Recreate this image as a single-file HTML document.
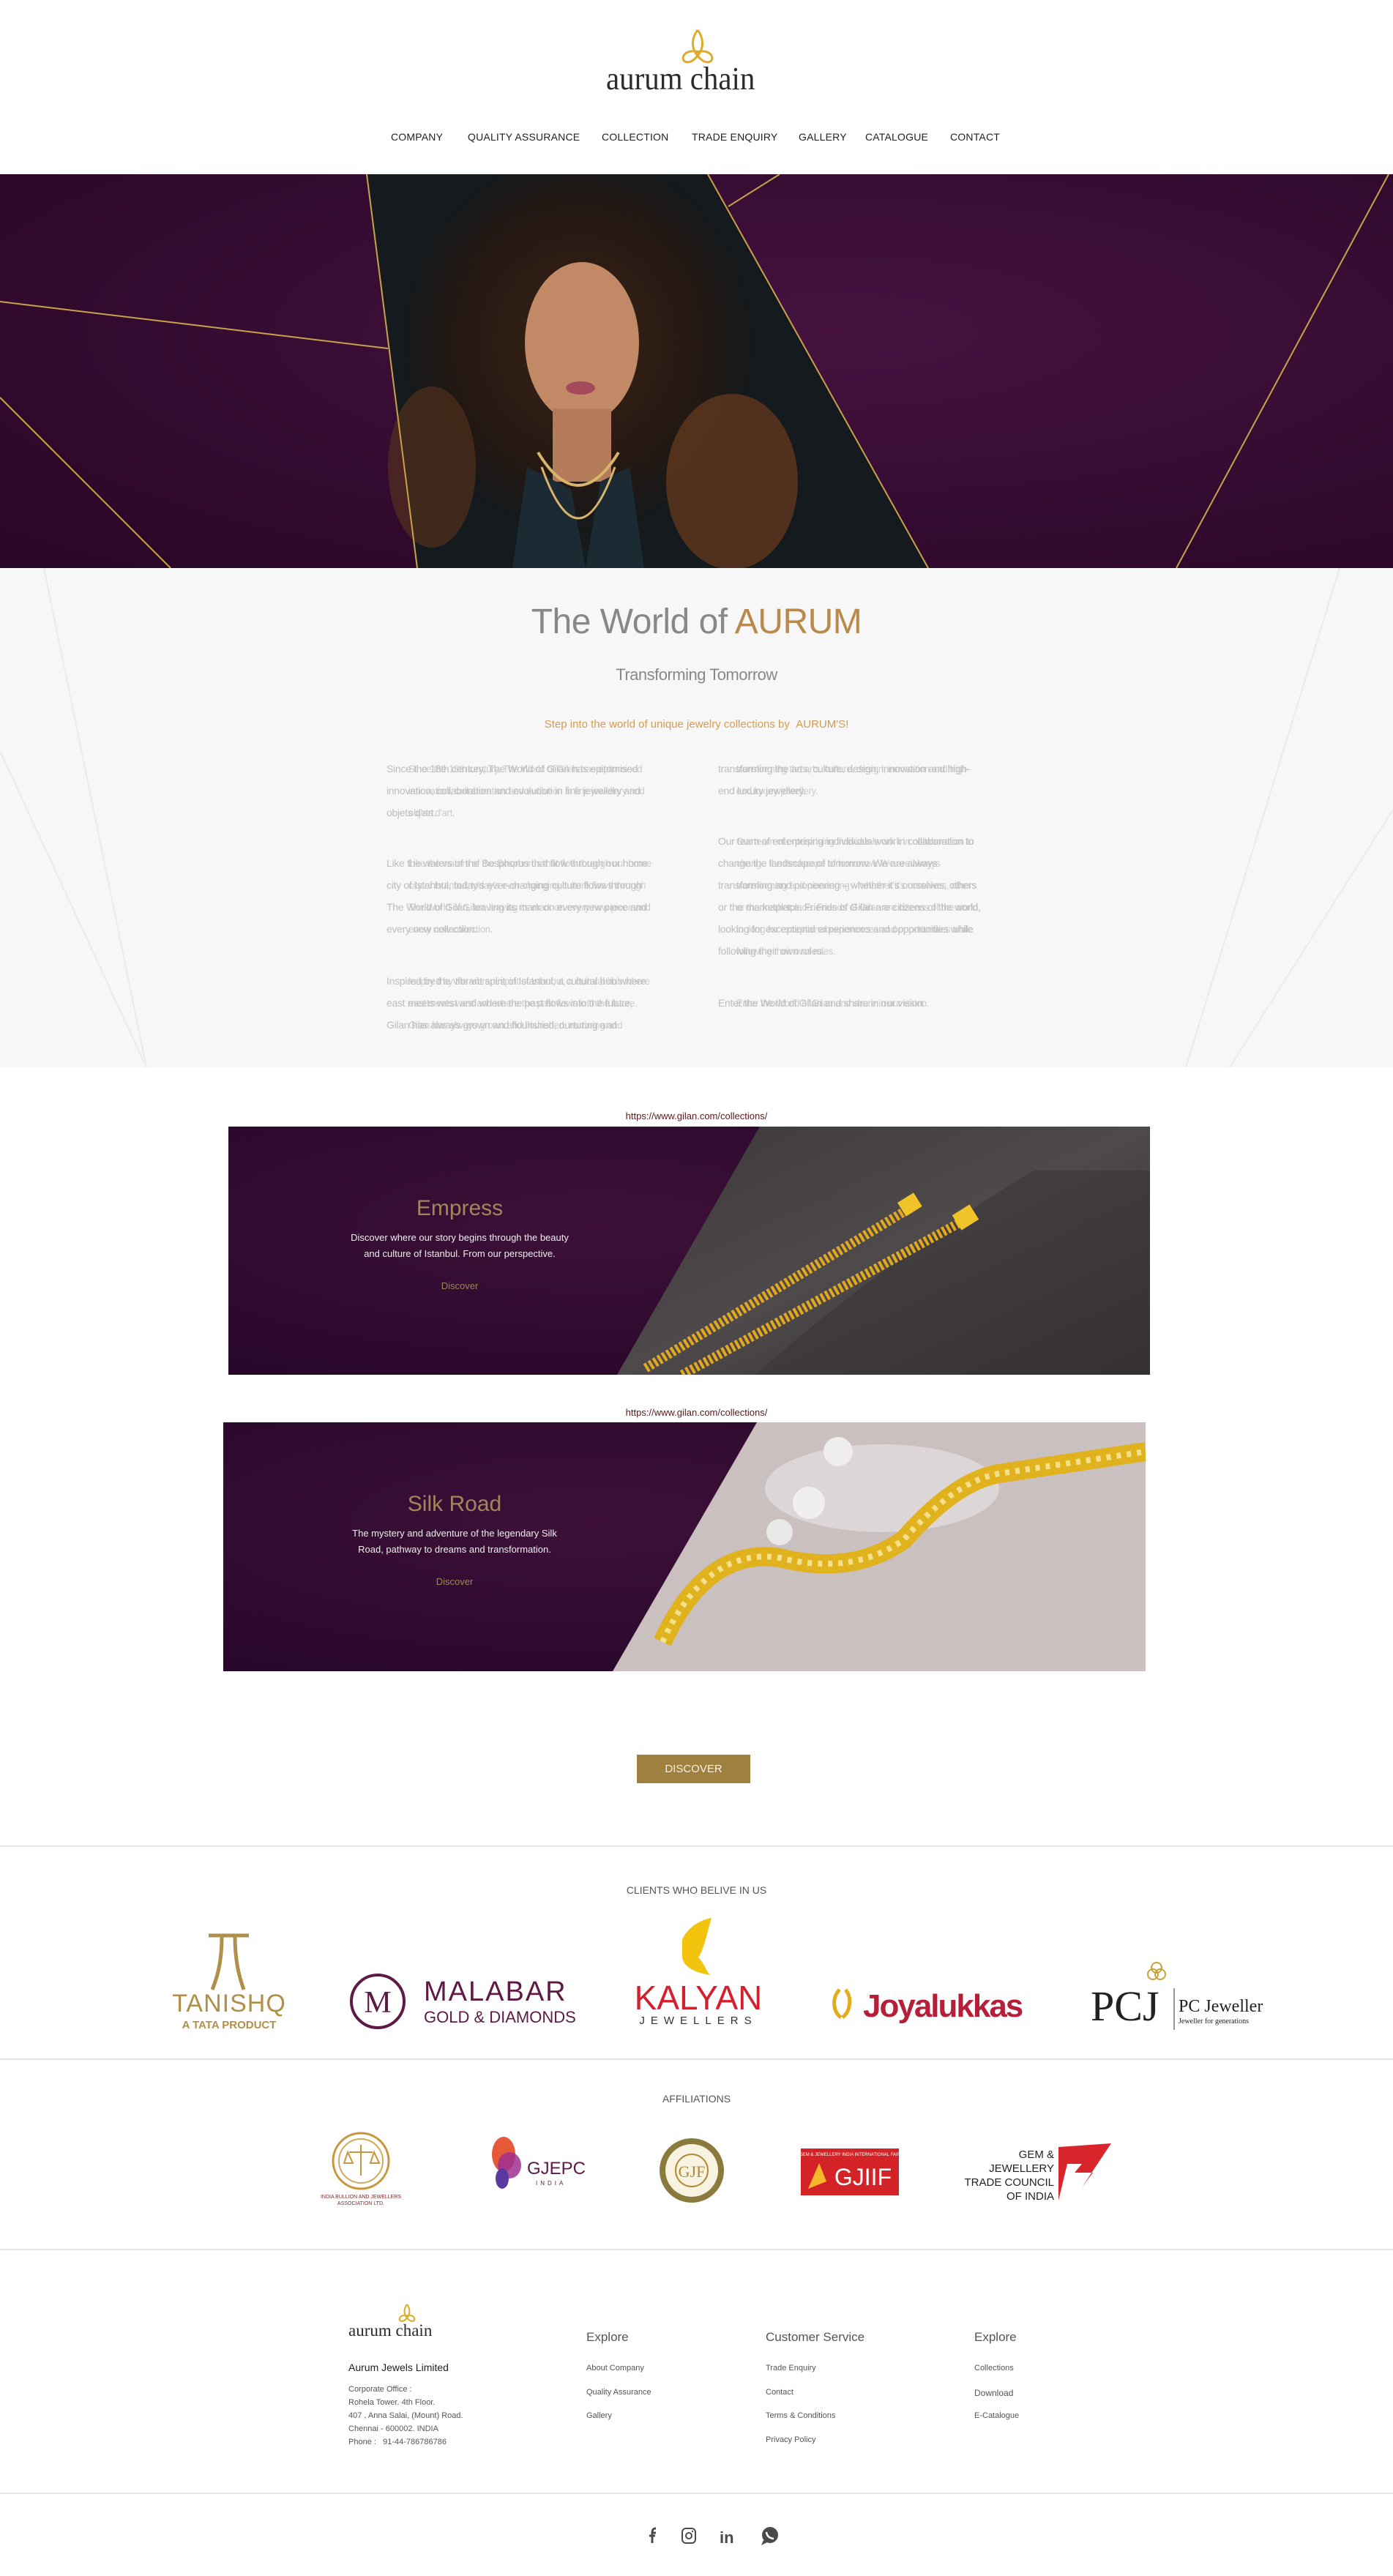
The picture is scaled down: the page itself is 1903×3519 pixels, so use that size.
<!DOCTYPE html>
<html><head><meta charset="utf-8">
<style>
*{margin:0;padding:0;box-sizing:border-box}
body{width:1903px;height:3519px;position:relative;background:#fff;font-family:"Liberation Sans",sans-serif;overflow:hidden}
.a{position:absolute}
.nav{top:179px;font-size:14px;color:#222;letter-spacing:0.2px;white-space:nowrap}
.col{font-size:14px;line-height:30px;color:#bdbdbd;white-space:nowrap;letter-spacing:-0.3px}
.ghost{opacity:.75;transform:scaleX(.93);transform-origin:left}
.hr{left:0;width:1903px;height:2px;background:#e4e4e4}
.ft{font-size:12px;color:#555;white-space:nowrap}
.fh{font-size:17px;color:#555;white-space:nowrap}
</style></head><body>

<!-- header logo -->
<svg class="a" style="left:928px;top:38px" width="50" height="52" viewBox="0 0 50 52">
<g fill="none" stroke="#e0ac28" stroke-width="3">
<path d="M25 3 C18 12 16 24 22 34 C26 40 30 44 34 46 C42 49 47 44 44 38 C41 32 30 30 22 34"/>
<path d="M25 3 C32 12 34 24 28 34 C24 40 20 44 16 46 C8 49 3 44 6 38 C9 32 20 30 28 34"/>
</g></svg>
<div class="a" style="left:828px;top:82px;font-family:'Liberation Serif',serif;font-size:44px;color:#2b2b2b;transform:scaleX(.93);transform-origin:left">aurum chain</div>

<div class="a nav" style="left:534px">COMPANY</div>
<div class="a nav" style="left:639px">QUALITY ASSURANCE</div>
<div class="a nav" style="left:822px">COLLECTION</div>
<div class="a nav" style="left:945px">TRADE ENQUIRY</div>
<div class="a nav" style="left:1091px">GALLERY</div>
<div class="a nav" style="left:1182px">CATALOGUE</div>
<div class="a nav" style="left:1298px">CONTACT</div>

<!-- hero -->
<svg class="a" style="left:0;top:238px" width="1903" height="538" viewBox="0 0 1903 538">
<defs>
<radialGradient id="pg" cx="0.6" cy="0.4" r="0.8"><stop offset="0" stop-color="#45123f"/><stop offset="1" stop-color="#2a0727"/></radialGradient>
<radialGradient id="hair" cx="0.5" cy="0.5" r="0.5"><stop offset="0" stop-color="#3a2418"/><stop offset="0.7" stop-color="#241812"/><stop offset="1" stop-color="#15191c"/></radialGradient>
</defs>
<rect width="1903" height="538" fill="url(#pg)"/>
<polygon points="501,0 967,0 1268,538 570,538" fill="#141a1d"/>
<ellipse cx="790" cy="230" rx="240" ry="260" fill="url(#hair)"/>
<ellipse cx="1000" cy="420" rx="90" ry="120" fill="#6b3c1e" opacity=".7"/>
<ellipse cx="590" cy="400" rx="60" ry="110" fill="#5a341c" opacity=".6"/>
<ellipse cx="795" cy="230" rx="78" ry="110" fill="#c28966"/>
<rect x="755" y="320" width="80" height="100" fill="#b47b5a"/>
<path d="M700 538 L720 400 L780 430 L800 538Z" fill="#1c2a33"/>
<path d="M880 538 L860 400 L820 420 L800 538Z" fill="#1c2a33"/>
<path d="M735 380 Q790 470 845 380" fill="none" stroke="#d8b56a" stroke-width="4"/>
<path d="M740 400 Q790 540 840 400" fill="none" stroke="#d8b56a" stroke-width="3"/>
<ellipse cx="793" cy="292" rx="20" ry="9" fill="#a54a5a"/>
<g stroke="#c9a24a" stroke-width="2" fill="none">
<line x1="501" y1="0" x2="570" y2="538"/>
<line x1="967" y1="0" x2="1268" y2="538"/>
<line x1="0" y1="174" x2="530" y2="238"/>
<line x1="0" y1="305" x2="233" y2="538"/>
<line x1="1897" y1="0" x2="1607" y2="538"/>
<line x1="1065" y1="0" x2="995" y2="44"/>
</g></svg>

<!-- world section -->
<div class="a" style="left:0;top:776px;width:1903px;height:682px;background:#f7f7f7"></div>
<svg class="a" style="left:0;top:776px" width="1903" height="682"><g stroke="#ecebe4" stroke-width="2" fill="none">
<line x1="60" y1="0" x2="200" y2="682"/><line x1="0" y1="250" x2="200" y2="682"/>
<line x1="1830" y1="0" x2="1620" y2="682"/><line x1="1903" y1="330" x2="1680" y2="682"/>
</g></svg>
<div class="a" style="left:0;width:1903px;top:822px;text-align:center;font-size:48px;color:#888;letter-spacing:-0.5px">The World of <span style="color:#b98a4c">AURUM</span></div>
<div class="a" style="left:0;width:1903px;top:909px;text-align:center;font-size:22px;color:#888;letter-spacing:-0.5px">Transforming Tomorrow</div>
<div class="a" style="left:0;width:1903px;top:981px;text-align:center;font-size:15px;color:#d49b52">Step into the world of unique jewelry collections by &nbsp;AURUM'S!</div>

<div class="a col" style="left:528px;top:1035px">Since the 18th century, The World of Gilan has epitomised<br>innovation, collaboration and evolution in fine jewellery and<br>objets d'art.</div>
<div class="a col ghost" style="left:558px;top:1035px">Since the 18th century, The World of Gilan has epitomised<br>innovation, collaboration and evolution in fine jewellery and<br>objets d'art.</div>
<div class="a col" style="left:528px;top:1164px">Like the waters of the Bosphorus that flow through our home<br>city of Istanbul, today's ever-changing culture flows through<br>The World of Gilan, leaving its mark on every new piece and<br>every new collection.</div>
<div class="a col ghost" style="left:558px;top:1164px">Like the waters of the Bosphorus that flow through our home<br>city of Istanbul, today's ever-changing culture flows through<br>The World of Gilan, leaving its mark on every new piece and<br>every new collection.</div>
<div class="a col" style="left:528px;top:1325px">Inspired by the vibrant spirit of Istanbul, a cultural hub where<br>east meets west and where the past flows into the future,<br>Gilan has always grown and flourished, nurturing and</div>
<div class="a col ghost" style="left:558px;top:1325px">Inspired by the vibrant spirit of Istanbul, a cultural hub where<br>east meets west and where the past flows into the future,<br>Gilan has always grown and flourished, nurturing and</div>

<div class="a col" style="left:981px;top:1035px">transforming the arts, culture, design, innovation and high-<br>end luxury jewellery.</div>
<div class="a col ghost" style="left:1006px;top:1035px">transforming the arts, culture, design, innovation and high-<br>end luxury jewellery.</div>
<div class="a col" style="left:981px;top:1134px">Our team of enterprising individuals work in collaboration to<br>change the landscape of tomorrow. We are always<br>transforming and pioneering – whether it's ourselves, others<br>or the marketplace. Friends of Gilan are citizens of the world,<br>looking for exceptional experiences and opportunities while<br>following their own rules.</div>
<div class="a col ghost" style="left:1006px;top:1134px">Our team of enterprising individuals work in collaboration to<br>change the landscape of tomorrow. We are always<br>transforming and pioneering – whether it's ourselves, others<br>or the marketplace. Friends of Gilan are citizens of the world,<br>looking for exceptional experiences and opportunities while<br>following their own rules.</div>
<div class="a col" style="left:981px;top:1355px">Enter the World of Gilan and share in our vision.</div>
<div class="a col ghost" style="left:1006px;top:1355px">Enter the World of Gilan and share in our vision.</div>

<!-- banner 1 -->
<div class="a" style="left:0;width:1903px;top:1517px;text-align:center;font-size:13px;color:#5a1a1a">https://www.gilan.com/collections/</div>
<svg class="a" style="left:312px;top:1539px" width="1259" height="339">
<defs><radialGradient id="b1" cx=".4" cy=".4" r=".7"><stop offset="0" stop-color="#3e1039"/><stop offset="1" stop-color="#28072a"/></radialGradient>
<linearGradient id="g1" x1="0" y1="0" x2="1" y2="1"><stop offset="0" stop-color="#3d393a"/><stop offset=".5" stop-color="#4e4a4b"/><stop offset="1" stop-color="#2e2b2c"/></linearGradient></defs>
<rect width="1259" height="339" fill="url(#b1)"/>
<polygon points="726,0 1259,0 1259,339 531,339" fill="url(#g1)"/>
<path d="M720 339 Q900 180 1100 60 L1259 60 L1259 339Z" fill="#3a3637" opacity=".6"/>
<g stroke="#e2a920" stroke-width="13" stroke-dasharray="4 3" fill="none">
<line x1="570" y1="330" x2="930" y2="112"/>
<line x1="620" y1="339" x2="1005" y2="128"/>
</g>
<rect x="918" y="96" width="26" height="22" fill="#f0c32a" transform="rotate(-32 930 107)"/>
<rect x="993" y="112" width="28" height="24" fill="#f0c32a" transform="rotate(-32 1007 124)"/>
</svg>
<div class="a" style="left:312px;width:632px;top:1634px;text-align:center;font-size:30px;color:#a0875a">Empress</div>
<div class="a" style="left:312px;width:632px;top:1680px;text-align:center;font-size:13px;line-height:22px;color:#eee">Discover where our story begins through the beauty<br>and culture of Istanbul. From our perspective.</div>
<div class="a" style="left:312px;width:632px;top:1749px;text-align:center;font-size:13px;color:#a0875a">Discover</div>

<!-- banner 2 -->
<div class="a" style="left:0;width:1903px;top:1922px;text-align:center;font-size:13px;color:#5a1a1a">https://www.gilan.com/collections/</div>
<svg class="a" style="left:305px;top:1943px" width="1260" height="340">
<defs><radialGradient id="b2" cx=".4" cy=".4" r=".7"><stop offset="0" stop-color="#3e1039"/><stop offset="1" stop-color="#28072a"/></radialGradient></defs>
<rect width="1260" height="340" fill="url(#b2)"/>
<polygon points="729,0 1260,0 1260,340 532,340" fill="#c9c0bf"/>
<ellipse cx="900" cy="90" rx="160" ry="60" fill="#e4dfdf" opacity=".7"/>
<circle cx="800" cy="110" r="22" fill="#f0eeee"/><circle cx="840" cy="40" r="20" fill="#efecec"/><circle cx="760" cy="150" r="18" fill="#eae7e7"/>
<path d="M600 300 Q660 170 760 185 Q860 210 930 160 Q1000 80 1060 70 L1260 40" fill="none" stroke="#e0b21e" stroke-width="26"/>
<path d="M600 300 Q660 170 760 185 Q860 210 930 160 Q1000 80 1060 70 L1260 40" fill="none" stroke="#f4e08a" stroke-width="8" stroke-dasharray="6 8"/>
</svg>
<div class="a" style="left:305px;width:632px;top:2038px;text-align:center;font-size:30px;color:#a0875a">Silk Road</div>
<div class="a" style="left:305px;width:632px;top:2084px;text-align:center;font-size:13px;line-height:22px;color:#eee">The mystery and adventure of the legendary Silk<br>Road, pathway to dreams and transformation.</div>
<div class="a" style="left:305px;width:632px;top:2153px;text-align:center;font-size:13px;color:#a0875a">Discover</div>

<div class="a" style="left:870px;top:2397px;width:155px;height:39px;background:#a0803f;color:#f5f0e6;font-size:15px;text-align:center;line-height:39px">DISCOVER</div>

<div class="a hr" style="top:2521px"></div>
<div class="a" style="left:0;width:1903px;top:2574px;text-align:center;font-size:14px;color:#555">CLIENTS WHO BELIVE IN US</div>

<!-- client logos -->
<svg class="a" style="left:225px;top:2638px" width="180" height="138">
<g fill="none" stroke="#b08f4a" stroke-width="5"><path d="M60 6 H115 M78 6 C78 40 73 60 65 80 M96 6 C96 40 101 60 108 80"/></g>
<text x="88" y="110" text-anchor="middle" font-family="Liberation Sans" font-size="34" fill="#b08f4a" letter-spacing="1">TANISHQ</text>
<text x="88" y="133" text-anchor="middle" font-family="Liberation Sans" font-size="15" font-weight="bold" fill="#b08f4a">A TATA PRODUCT</text>
</svg>
<svg class="a" style="left:478px;top:2695px" width="320" height="82">
<circle cx="38" cy="39" r="36" fill="none" stroke="#5c1a45" stroke-width="4"/>
<text x="38" y="54" text-anchor="middle" font-family="Liberation Serif" font-size="42" fill="#5c1a45">M</text>
<text x="101" y="38" font-family="Liberation Sans" font-size="38" fill="#5c1a45" letter-spacing="2">MALABAR</text>
<text x="101" y="68" font-family="Liberation Sans" font-size="22" fill="#5c1a45">GOLD &amp; DIAMONDS</text>
</svg>
<svg class="a" style="left:862px;top:2618px" width="190" height="150">
<path d="M70 32 C75 18 92 5 110 2 C103 25 100 45 92 56 C102 66 104 80 110 80 C90 78 72 70 70 56Z" fill="#f2c40e"/>
<text x="92" y="127" text-anchor="middle" font-family="Liberation Sans" font-size="46" fill="#d3202f">KALYAN</text>
<text x="92" y="147" text-anchor="middle" font-family="Liberation Sans" font-size="15" fill="#333" letter-spacing="8">JEWELLERS</text>
</svg>
<svg class="a" style="left:1135px;top:2710px" width="290" height="55">
<path d="M12 8 C0 20 4 40 14 46 M20 8 C30 20 26 38 16 46" fill="none" stroke="#e3ac1f" stroke-width="5"/>
<text x="44" y="45" font-family="Liberation Sans" font-size="44" font-weight="bold" fill="#b51f3a" letter-spacing="-2">Joyalukkas</text>
</svg>
<svg class="a" style="left:1490px;top:2680px" width="260" height="95">
<g fill="none" stroke="#c9a23b" stroke-width="2"><circle cx="90" cy="8" r="7"/><circle cx="85" cy="17" r="7"/><circle cx="95" cy="17" r="7"/></g>
<text x="0" y="80" font-family="Liberation Serif" font-size="58" fill="#222">PCJ</text>
<line x1="114" y1="36" x2="114" y2="93" stroke="#333"/>
<text x="120" y="68" font-family="Liberation Serif" font-size="24" fill="#222">PC Jeweller</text>
<text x="120" y="84" font-family="Liberation Serif" font-size="10" fill="#222">Jeweller for generations</text>
</svg>

<div class="a hr" style="top:2812px"></div>
<div class="a" style="left:0;width:1903px;top:2859px;text-align:center;font-size:14px;color:#555">AFFILIATIONS</div>

<svg class="a" style="left:425px;top:2910px" width="140" height="110">
<circle cx="68" cy="42" r="38" fill="none" stroke="#c8963e" stroke-width="3"/><circle cx="68" cy="42" r="30" fill="none" stroke="#d6a85a" stroke-width="2"/>
<path d="M68 20 V62 M52 30 H84 M50 30 L45 45 H57Z M86 30 L81 45 H93Z" stroke="#c8963e" stroke-width="2" fill="none"/>
<text x="68" y="93" text-anchor="middle" font-family="Liberation Sans" font-size="7" fill="#7a2a2a">INDIA BULLION AND JEWELLERS</text>
<text x="68" y="102" text-anchor="middle" font-family="Liberation Sans" font-size="7" fill="#7a2a2a">ASSOCIATION LTD.</text>
</svg>
<svg class="a" style="left:660px;top:2918px" width="140" height="82">
<ellipse cx="28" cy="25" rx="16" ry="24" fill="#e65a3a"/><ellipse cx="36" cy="40" rx="16" ry="18" fill="#a03090" opacity=".85"/><ellipse cx="26" cy="58" rx="9" ry="14" fill="#5a3aa0"/>
<text x="60" y="52" font-family="Liberation Sans" font-size="24" fill="#5a1a4a">GJEPC</text>
<text x="72" y="67" font-family="Liberation Sans" font-size="8" fill="#5a1a4a" letter-spacing="4">INDIA</text>
</svg>
<svg class="a" style="left:898px;top:2918px" width="94" height="94">
<circle cx="47" cy="47" r="44" fill="#8a7a3e"/><circle cx="47" cy="47" r="36" fill="#f8f2e0"/><circle cx="47" cy="47" r="22" fill="none" stroke="#b08a3a" stroke-width="2"/>
<text x="47" y="56" text-anchor="middle" font-family="Liberation Serif" font-size="22" fill="#b08a3a">GJF</text>
</svg>
<svg class="a" style="left:1094px;top:2935px" width="134" height="64">
<rect width="134" height="64" fill="#d42326"/>
<path d="M10 55 L25 20 L35 45Z" fill="#f5b82a"/>
<text x="85" y="50" text-anchor="middle" font-family="Liberation Sans" font-size="32" fill="#fff">GJIIF</text>
<text x="67" y="10" text-anchor="middle" font-family="Liberation Sans" font-size="6" fill="#fff">GEM &amp; JEWELLERY INDIA INTERNATIONAL FAIR</text>
</svg>
<svg class="a" style="left:1300px;top:2928px" width="230" height="80">
<text x="140" y="20" text-anchor="end" font-family="Liberation Sans" font-size="15" fill="#222">GEM &amp;</text>
<text x="140" y="39" text-anchor="end" font-family="Liberation Sans" font-size="15" fill="#222">JEWELLERY</text>
<text x="140" y="58" text-anchor="end" font-family="Liberation Sans" font-size="15" fill="#222">TRADE COUNCIL</text>
<text x="140" y="77" text-anchor="end" font-family="Liberation Sans" font-size="15" fill="#222">OF INDIA</text>
<path d="M146 5 L218 0 L178 60 L193 40 L168 40 L178 28 L158 28 L146 78Z" fill="#d8242a"/>
</svg>

<div class="a hr" style="top:3072px"></div>

<!-- footer -->
<svg class="a" style="left:543px;top:3145px" width="26" height="30" viewBox="0 0 50 52">
<g fill="none" stroke="#e0ac28" stroke-width="4">
<path d="M25 3 C18 12 16 24 22 34 C26 40 30 44 34 46 C42 49 47 44 44 38 C41 32 30 30 22 34"/>
<path d="M25 3 C32 12 34 24 28 34 C24 40 20 44 16 46 C8 49 3 44 6 38 C9 32 20 30 28 34"/>
</g></svg>
<div class="a" style="left:476px;top:3171px;font-family:'Liberation Serif',serif;font-size:23px;color:#2b2b2b">aurum chain</div>
<div class="a ft" style="left:476px;top:3226px;font-size:14px;color:#222">Aurum Jewels Limited</div>
<div class="a ft" style="left:476px;top:3255px;font-size:11px;line-height:18px">Corporate Office :<br>Rohela Tower. 4th Floor.<br>407 , Anna Salai, (Mount) Road.<br>Chennai - 600002. INDIA<br>Phone : &nbsp;&nbsp;91-44-786786786</div>

<div class="a fh" style="left:801px;top:3183px">Explore</div>
<div class="a fh" style="left:1046px;top:3183px">Customer Service</div>
<div class="a fh" style="left:1331px;top:3183px">Explore</div>
<div class="a ft" style="left:801px;top:3229px;font-size:11px">About Company</div>
<div class="a ft" style="left:801px;top:3262px;font-size:11px">Quality Assurance</div>
<div class="a ft" style="left:801px;top:3294px;font-size:11px">Gallery</div>
<div class="a ft" style="left:1046px;top:3229px;font-size:11px">Trade Enquiry</div>
<div class="a ft" style="left:1046px;top:3262px;font-size:11px">Contact</div>
<div class="a ft" style="left:1046px;top:3294px;font-size:11px">Terms &amp; Conditions</div>
<div class="a ft" style="left:1046px;top:3327px;font-size:11px">Privacy Policy</div>
<div class="a ft" style="left:1331px;top:3229px;font-size:11px">Collections</div>
<div class="a ft" style="left:1331px;top:3262px;font-size:12px">Download</div>
<div class="a ft" style="left:1331px;top:3294px;font-size:11px">E-Catalogue</div>

<div class="a hr" style="top:3405px"></div>

<svg class="a" style="left:876px;top:3450px" width="200" height="28">
<path d="M15 24 V10 H20 M11 14 H19 M15 10 C15 5 17 4 20 4" fill="none" stroke="#4a4a4a" stroke-width="3"/>
<rect x="56" y="4" width="18" height="20" rx="5" fill="none" stroke="#4a4a4a" stroke-width="2"/><circle cx="65" cy="14" r="4" fill="none" stroke="#4a4a4a" stroke-width="2"/><circle cx="70" cy="8" r="1.2" fill="#4a4a4a"/>
<text x="107" y="24" font-family="Liberation Sans" font-size="22" font-weight="bold" fill="#4a4a4a">in</text>
<circle cx="176" cy="13" r="11" fill="#4a4a4a"/><path d="M167 20 L164 27 L172 23Z" fill="#4a4a4a"/>
<path d="M171 9 Q172 17 181 18" stroke="#fff" stroke-width="2.5" fill="none"/>
</svg>

</body></html>
